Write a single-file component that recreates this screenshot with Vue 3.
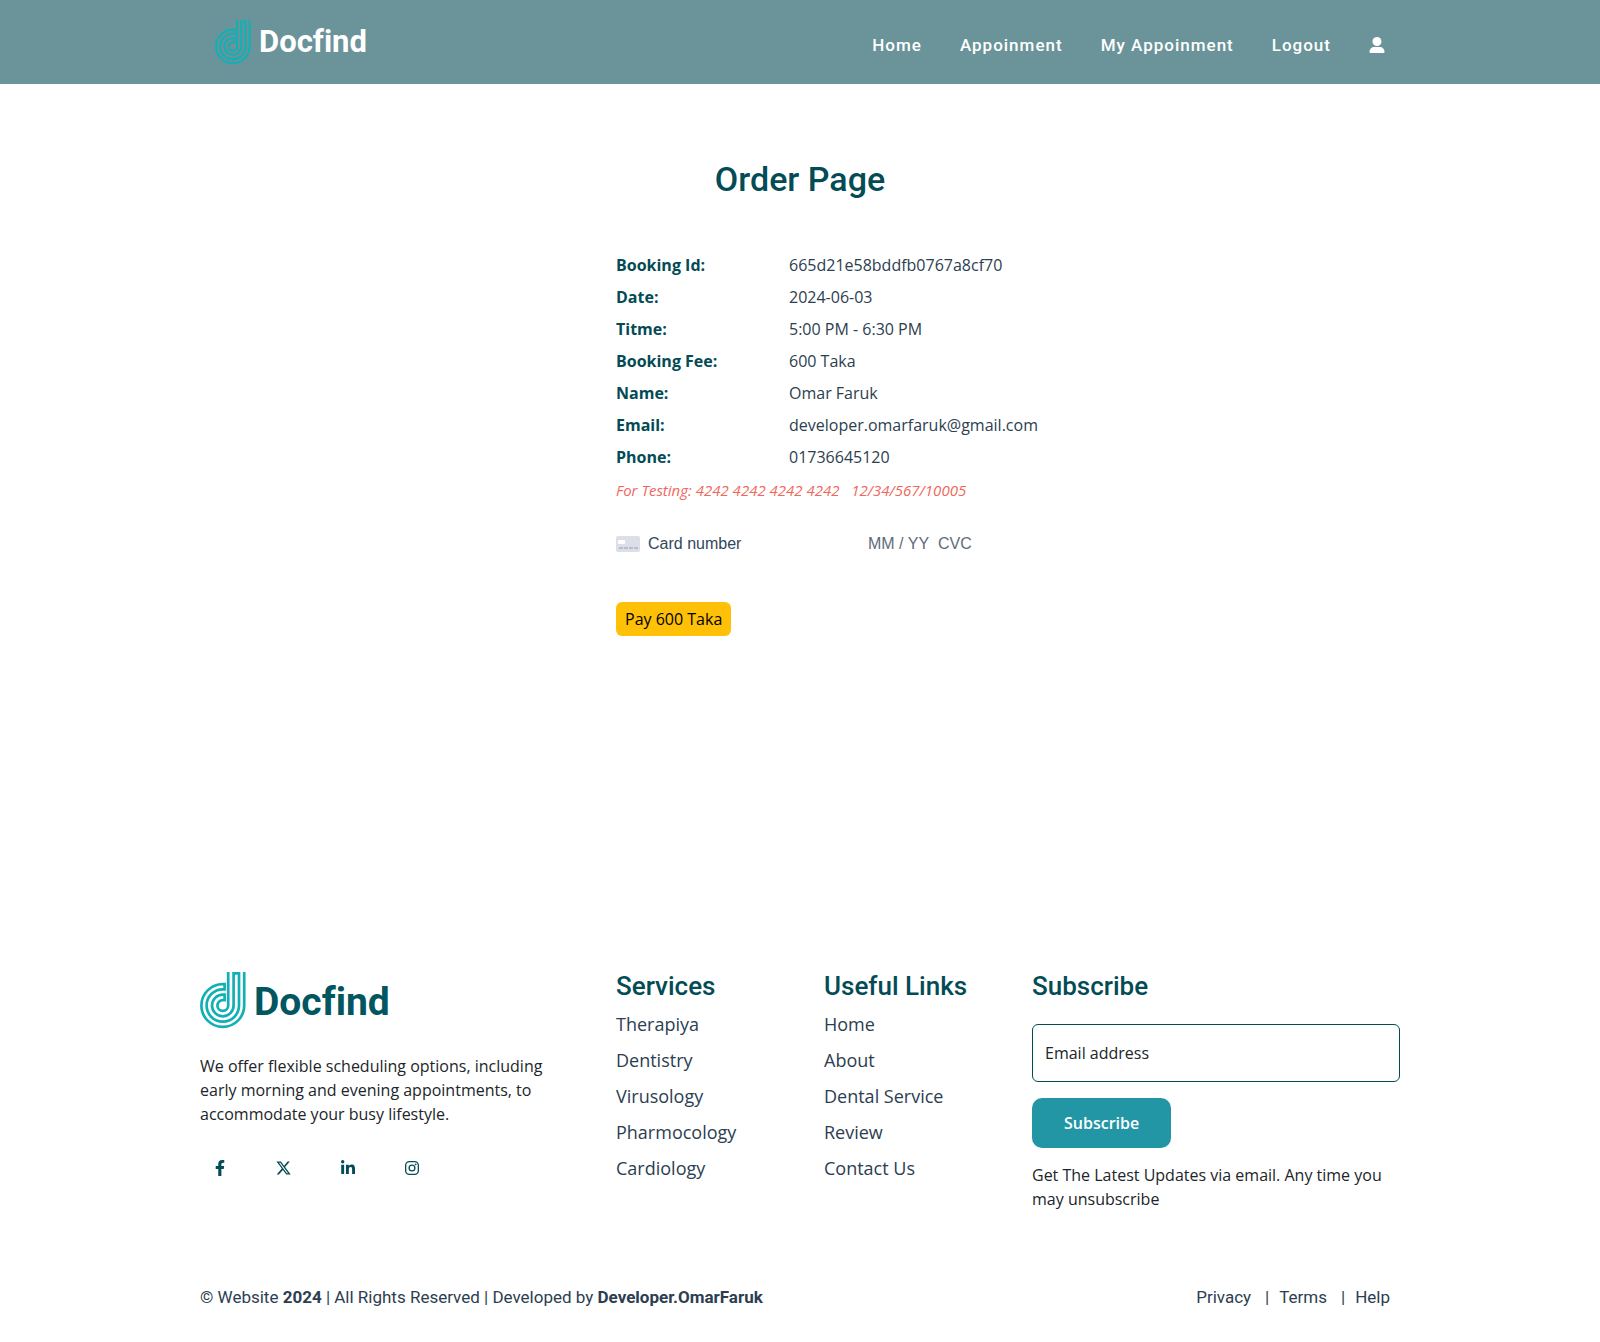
<script setup>
import { ref } from 'vue'

const navLinks = ['Home', 'Appoinment', 'My Appoinment', 'Logout']
const details = [
  ['Booking Id:', '665d21e58bddfb0767a8cf70'],
  ['Date:', '2024-06-03'],
  ['Titme:', '5:00 PM - 6:30 PM'],
  ['Booking Fee:', '600 Taka'],
  ['Name:', 'Omar Faruk'],
  ['Email:', 'developer.omarfaruk@gmail.com'],
  ['Phone:', '01736645120'],
]
const columns = [
  { title: 'Services', links: ['Therapiya', 'Dentistry', 'Virusology', 'Pharmocology', 'Cardiology'] },
  { title: 'Useful Links', links: ['Home', 'About', 'Dental Service', 'Review', 'Contact Us'] },
]
const logoPath =
  'M44.2 0V33.5A21.4 21.4 0 1 1 22.800 12.100H24.6V17.300H22.800A16.2 16.2 0 1 0 39 33.5V1.3H33.600V33.5A10.8 10.8 0 1 1 22.800 22.7H24.6V28.1H22.800A5.4 5.4 0 1 0 28.200 33.5V0'
const card = ref('')
const expiry = ref('')
const cvc = ref('')
const email = ref('')
</script>

<template>
  <div class="page">
    <header class="header">
      <div class="header-inner">
        <a href="#" class="logo logo-light">
          <svg viewBox="0 0 46 57" aria-hidden="true"><path :d="logoPath" /></svg>
          <span>Docfind</span>
        </a>
        <nav class="nav">
          <a v-for="link in navLinks" :key="link" href="#">{{ link }}</a>
          <a href="#" aria-label="Profile" class="profile">
            <svg viewBox="0 0 16 17" aria-hidden="true">
              <circle cx="8" cy="4.5" r="4.5" />
              <path d="M0.5 15C0.5 12 2.5 10 5.5 10H10.5C13.5 10 15.5 12 15.5 15Q15.5 16 14.5 16H1.5Q0.5 16 0.5 15Z" />
            </svg>
          </a>
        </nav>
      </div>
    </header>

    <main class="main">
      <h1>Order Page</h1>
      <section class="order">
        <dl class="details">
          <template v-for="[label, value] in details" :key="label">
            <dt>{{ label }}</dt>
            <dd>{{ value }}</dd>
          </template>
        </dl>
        <p class="testing">For Testing: 4242 4242 4242 4242 &nbsp; 12/34/567/10005</p>
        <form @submit.prevent>
          <div class="card-field">
            <svg viewBox="0 0 24 16" aria-hidden="true">
              <rect width="24" height="16" rx="2" fill="#dcdfe8" />
              <rect x="2" y="4" width="7" height="4" rx="1" fill="#fff" />
              <path d="M3 12H22" stroke="#b9bdcc" stroke-width="2" stroke-dasharray="4 1" />
            </svg>
            <input v-model="card" class="card-number" placeholder="Card number" aria-label="Card number" />
            <input v-model="expiry" class="card-expiry" placeholder="MM / YY" aria-label="Expiry date" />
            <input v-model="cvc" class="card-cvc" placeholder="CVC" aria-label="CVC" />
          </div>
          <button type="submit" class="pay">Pay 600 Taka</button>
        </form>
      </section>
    </main>

    <footer class="footer">
      <div class="footer-grid">
        <div>
          <a href="#" class="logo logo-dark">
            <svg viewBox="0 0 46 57" aria-hidden="true"><path :d="logoPath" /></svg>
            <span>Docfind</span>
          </a>
          <p class="about">
            We offer flexible scheduling options, including early morning and evening appointments, to
            accommodate your busy lifestyle.
          </p>
          <div class="social">
            <a href="#" aria-label="Facebook">
              <svg viewBox="0 0 320 512"><path d="M279.14 288l14.22-92.66h-88.91v-60.13c0-25.35 12.42-50.06 52.24-50.06h40.42V6.26S260.43 0 225.36 0c-73.22 0-121.08 44.38-121.08 124.72v70.62H22.89V288h81.39v224h100.17V288z" /></svg>
            </a>
            <a href="#" aria-label="X">
              <svg viewBox="-0.5 -1 18 18"><path d="M12.6.75h2.454l-5.36 6.142L16 15.25h-4.937l-3.867-5.07-4.425 5.07H.316l5.733-6.57L0 .75h5.063l3.495 4.633L12.601.75Zm-.86 13.028h1.36L4.323 2.145H2.865z" /></svg>
            </a>
            <a href="#" aria-label="LinkedIn">
              <svg viewBox="-32 0 512 512"><path d="M100.28 448H7.4V148.9h92.88zM53.79 108.1C24.09 108.1 0 83.5 0 53.8a53.79 53.79 0 0 1 107.58 0c0 29.7-24.1 54.3-53.79 54.3zM447.9 448h-92.68V302.4c0-34.7-.7-79.2-48.29-79.2-48.29 0-55.69 37.7-55.69 76.7V448h-92.78V148.9h89.08v40.8h1.3c12.4-23.5 42.69-48.3 87.88-48.3 94 0 111.28 61.9 111.28 142.3V448z" /></svg>
            </a>
            <a href="#" aria-label="Instagram">
              <svg viewBox="0 0 16 16">
                <g fill="none" stroke="currentColor" stroke-width="1.3">
                  <rect x="1.65" y="1.65" width="12.7" height="12.7" rx="3.7" />
                  <circle cx="8" cy="8" r="2.9" />
                </g>
                <circle cx="11.7" cy="4.3" r="0.9" />
              </svg>
            </a>
          </div>
        </div>

        <div v-for="column in columns" :key="column.title">
          <h2>{{ column.title }}</h2>
          <ul>
            <li v-for="link in column.links" :key="link"><a href="#">{{ link }}</a></li>
          </ul>
        </div>

        <div>
          <h2>Subscribe</h2>
          <form class="subscribe" @submit.prevent>
            <input v-model="email" type="email" placeholder="Email address" aria-label="Email address" />
            <button type="submit">Subscribe</button>
          </form>
          <p>Get The Latest Updates via email. Any time you may unsubscribe</p>
        </div>
      </div>

      <div class="bottom">
        <div>© Website <strong>2024</strong> | All Rights Reserved | Developed by <strong>Developer.OmarFaruk</strong></div>
        <div class="legal">
          <a href="#">Privacy</a><span>|</span><a href="#">Terms</a><span>|</span><a href="#">Help</a>
        </div>
      </div>
    </footer>
  </div>
</template>

<style>
body {
  margin: 0;
}
</style>

<style scoped>
.page {
  background: #fff;
  color: #212529;
  font: 16px/24px "Open Sans", sans-serif;
}
.page * {
  box-sizing: border-box;
}
a {
  color: inherit;
  text-decoration: none;
}
h1,
h2,
p,
ul,
dl,
dd {
  margin: 0;
  padding: 0;
}
h1,
h2 {
  color: #034b55;
  font-family: Roboto, sans-serif;
  font-weight: 500;
}
input,
button {
  font: inherit;
}

.header {
  background: #6a9499;
}
.header-inner {
  display: flex;
  justify-content: space-between;
  max-width: 1200px;
  height: 84px;
  margin: 0 auto;
  padding: 0 15px;
}
.logo {
  display: flex;
  align-items: center;
  font-family: Roboto, sans-serif;
  font-weight: 700;
  font-variant-ligatures: none;
}
.logo path {
  fill: none;
  stroke: #12b0b4;
  stroke-width: 2.7;
}
.logo-light {
  gap: 8px;
  height: 84px;
  color: #fff;
  font-size: 31px;
}
.logo-light svg {
  width: 36px;
  height: 45px;
}
.logo-dark {
  gap: 8px;
  height: 57px;
  color: #02565f;
  font-size: 39px;
}
.logo-dark svg {
  width: 46px;
  height: 57px;
}
.logo-dark span {
  padding-top: 2px;
}
.nav {
  display: flex;
  align-items: center;
  gap: 38px;
  padding-top: 6px;
  color: #fff;
  font-family: Roboto, sans-serif;
  font-size: 17px;
  font-weight: 500;
  letter-spacing: 1px;
}
.profile svg {
  display: block;
  width: 16px;
  height: 17px;
  fill: currentColor;
}

.main {
  padding: 76px 0 336px;
}
h1 {
  font-size: 34px;
  line-height: 38px;
  text-align: center;
}
.order {
  width: 368px;
  margin: 55px auto 0;
}
.details {
  display: grid;
  grid-template-columns: 173px max-content;
  row-gap: 8px;
  color: #2c3e50;
}
dt {
  color: #034b55;
  font-weight: 700;
}
.testing {
  margin-top: 9px;
  color: #f0685c;
  font-size: 15px;
  font-style: italic;
}
.card-field {
  display: flex;
  align-items: center;
  height: 20px;
  margin: 32px 0 48px;
  font: 16px/20px "Liberation Sans", sans-serif;
}
.card-field svg {
  width: 24px;
  height: 16px;
  margin-right: 8px;
}
.card-field input {
  height: 20px;
  padding: 0;
  border: 0;
  outline: 0;
  background: none;
  color: #32475b;
}
.card-field input::placeholder {
  color: #32475b;
  opacity: 1;
}
.card-field .card-expiry::placeholder,
.card-field .card-cvc::placeholder {
  color: #5f6c79;
}
.card-number {
  width: 220px;
}
.card-expiry {
  width: 70px;
}
.card-cvc {
  width: 46px;
}
.pay {
  height: 34px;
  padding: 0 9px;
  border: 0;
  border-radius: 6px;
  background: #ffc107;
  color: #000;
}

.footer {
  max-width: 1200px;
  margin: 0 auto;
  padding-bottom: 33px;
}
.footer-grid {
  display: grid;
  grid-template-columns: 52fr 26fr 26fr 46fr;
}
.about {
  max-width: 360px;
  margin-top: 25px;
}
.social {
  display: flex;
  gap: 48px;
  margin-top: 34px;
  padding-left: 12px;
  color: #034b55;
}
.social svg {
  display: block;
  width: 16px;
  height: 16px;
  fill: currentColor;
}
h2 {
  font-size: 26px;
  line-height: 28px;
}
ul {
  margin-top: 6px;
  color: #2c3e50;
  font-size: 18px;
  line-height: 36px;
  list-style: none;
}
.subscribe {
  display: flex;
  flex-direction: column;
  align-items: flex-start;
  gap: 16px;
  margin: 24px 0 15px;
}
.subscribe input {
  width: 100%;
  height: 58px;
  padding: 0 12px;
  border: 1px solid #034b55;
  border-radius: 6px;
  color: #212529;
}
.subscribe input::placeholder {
  color: #212529;
  opacity: 1;
}
.subscribe button {
  height: 50px;
  padding: 0 32px;
  border: 0;
  border-radius: 10px;
  background: #2396a6;
  color: #fff;
  font-weight: 600;
}
.bottom {
  display: flex;
  justify-content: space-between;
  margin-top: 74px;
  padding-right: 10px;
  color: #2c3e50;
  font-family: Roboto, sans-serif;
  font-size: 17px;
}
.legal span {
  margin: 0 10px 0 14px;
}
</style>
